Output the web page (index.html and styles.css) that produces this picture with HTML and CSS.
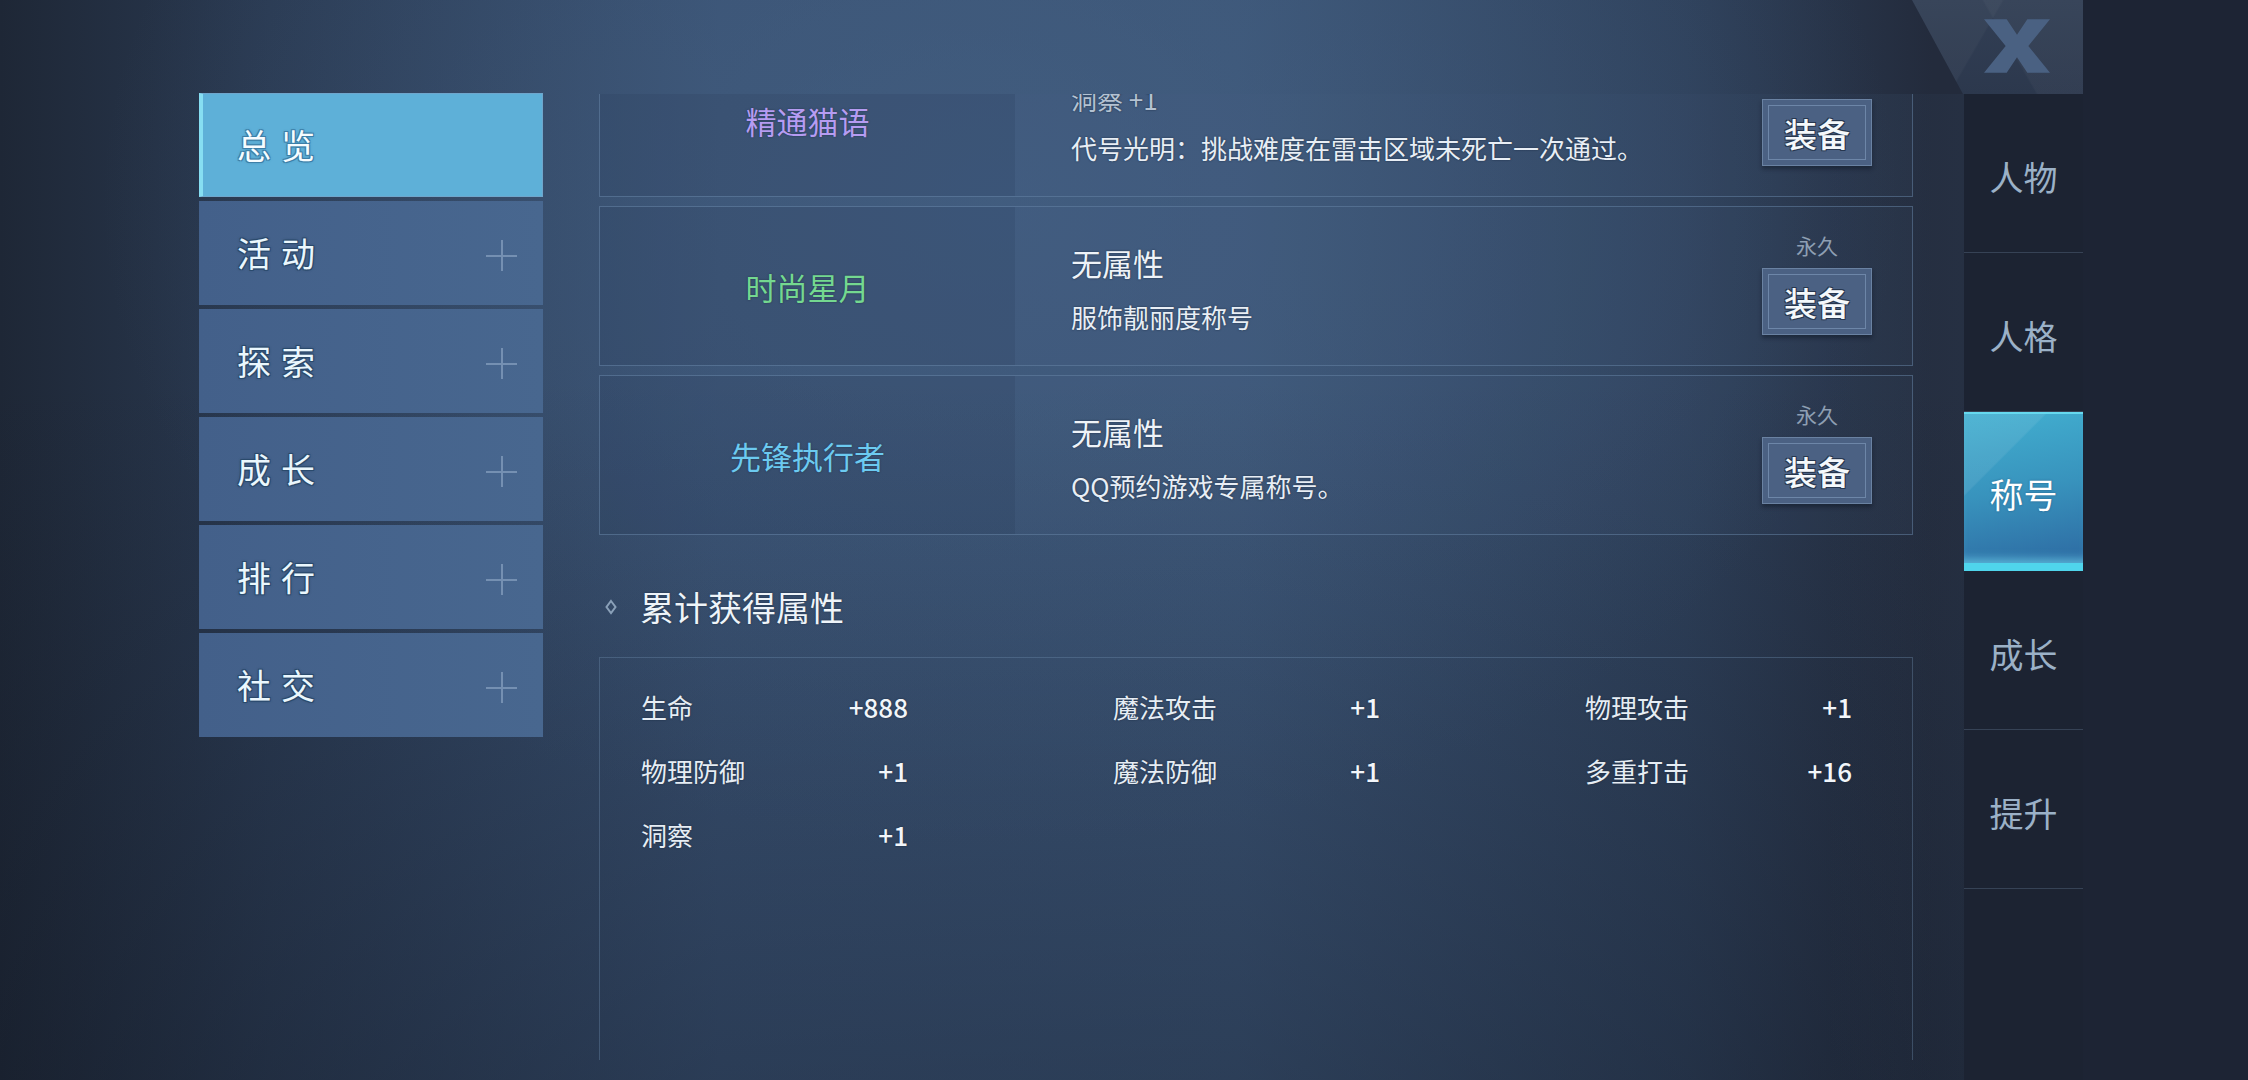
FILE: index.html
```html
<!DOCTYPE html>
<html lang="zh-CN">
<head>
  <meta charset="UTF-8" />
  <meta name="viewport" content="width=device-width, initial-scale=1.0"/>
  <title>称号</title>
  <link rel="stylesheet" href="styles.css">
</head>
<body>
  <div class="app">
    <ul class="sidebar">
      <li class="side-item active">总览</li>
      <li class="side-item">活动<span class="plus"></span></li>
      <li class="side-item">探索<span class="plus"></span></li>
      <li class="side-item">成长<span class="plus"></span></li>
      <li class="side-item">排行<span class="plus"></span></li>
      <li class="side-item">社交<span class="plus"></span></li>
    </ul>

    <div class="right-area">
      <div class="header">
        <button class="close" type="button" aria-label="关闭">
          <svg width="66" height="54" viewBox="0 0 64 52">
            <polygon points="0,0 22,0 32,15 42,0 64,0 43,26 64,52 42,52 32,37 22,52 0,52 21,26" fill="#4a6182"/>
          </svg>
        </button>
      </div>

      <div class="body">
        <div class="content">
          <div class="scroll">
            <div class="card">
              <div class="card-name purple">精通猫语</div>
              <div class="card-info">
                <div class="card-title stat">洞察 +1</div>
                <div class="card-desc">代号光明：挑战难度在雷击区域未死亡一次通过。</div>
              </div>
              <div class="card-action">
                <span class="expire">永久</span>
                <button class="equip" type="button">装备</button>
              </div>
            </div>

            <div class="card">
              <div class="card-name green">时尚星月</div>
              <div class="card-info">
                <div class="card-title">无属性</div>
                <div class="card-desc">服饰靓丽度称号</div>
              </div>
              <div class="card-action">
                <span class="expire">永久</span>
                <button class="equip" type="button">装备</button>
              </div>
            </div>

            <div class="card">
              <div class="card-name cyan">先锋执行者</div>
              <div class="card-info">
                <div class="card-title">无属性</div>
                <div class="card-desc">QQ预约游戏专属称号。</div>
              </div>
              <div class="card-action">
                <span class="expire">永久</span>
                <button class="equip" type="button">装备</button>
              </div>
            </div>

            <h3 class="section-title">
              <svg class="diamond" width="12" height="16" viewBox="0 0 12 16">
                <polygon points="6,2 10.5,8 6,14 1.5,8" fill="none" stroke="#8aa0b8" stroke-width="2"/>
              </svg>
              累计获得属性
            </h3>

            <div class="stats-box">
              <div class="stats">
                <div class="stat-row"><span>生命</span><b>+888</b></div>
                <div class="stat-row"><span>魔法攻击</span><b>+1</b></div>
                <div class="stat-row"><span>物理攻击</span><b>+1</b></div>
                <div class="stat-row"><span>物理防御</span><b>+1</b></div>
                <div class="stat-row"><span>魔法防御</span><b>+1</b></div>
                <div class="stat-row"><span>多重打击</span><b>+16</b></div>
                <div class="stat-row"><span>洞察</span><b>+1</b></div>
              </div>
            </div>
          </div>
        </div>

        <ul class="nav">
          <li class="nav-item">人物</li>
          <li class="nav-item">人格</li>
          <li class="nav-item active">称号</li>
          <li class="nav-item">成长</li>
          <li class="nav-item">提升</li>
        </ul>
      </div>
    </div>

    <div class="edge"></div>
  </div>
</body>
</html>
```

FILE: styles.css
```css
* {
  box-sizing: border-box;
}

body {
  margin: 0;
  width: 2248px;
  height: 1080px;
  overflow: hidden;
  font-family: "Noto Sans CJK SC", "Noto Sans", sans-serif;
  color: #e8eef5;
  background-color: #2b3d56;
  background-image:
    linear-gradient(180deg, rgba(16, 22, 34, 0) 35%, rgba(16, 22, 34, 0.35) 100%),
    radial-gradient(ellipse 900px 650px at 1000px 200px, rgba(72, 102, 138, 0.5), rgba(72, 102, 138, 0)),
    linear-gradient(90deg, #1e2736 0%, #2a3a52 12%, #395172 32%, #3b5475 55%, #2e405a 75%, #232b3c 86%);
}

ul {
  list-style: none;
  margin: 0;
  padding: 0;
}

button {
  font-family: inherit;
  border: none;
  padding: 0;
  cursor: pointer;
}

.app {
  display: flex;
  height: 100%;
}

/* left menu */

.sidebar {
  width: 344px;
  margin: 93px 0 0 199px;
  display: flex;
  flex-direction: column;
  gap: 4px;
}

.side-item {
  height: 104px;
  display: flex;
  align-items: center;
  justify-content: space-between;
  padding: 0 26px 2px 38px;
  background: linear-gradient(90deg, #43608a, #48678f);
  font-size: 34px;
  letter-spacing: 10px;
  color: #eaf7fd;
  text-shadow: -1px -1px 0 #2a4a6c, 1px -1px 0 #2a4a6c, -1px 1px 0 #2a4a6c, 1px 1px 0 #2a4a6c, 0 0 3px #1e3652;
}

.side-item.active {
  background: #5eb0d8;
  border: 1px solid #6fa6cc;
  border-left: 4px solid #86def2;
  padding-left: 34px;
  color: #f6fcff;
  text-shadow: -1px -1px 0 #3d7fa8, 1px -1px 0 #3d7fa8, -1px 1px 0 #3d7fa8, 1px 1px 0 #3d7fa8, 0 0 3px #2f6d96;
}

.plus {
  position: relative;
  width: 31px;
  height: 31px;
  margin-top: 6px;
}

.plus::before,
.plus::after {
  content: "";
  position: absolute;
  background: #7590b2;
}

.plus::before {
  left: 0;
  right: 0;
  top: 15px;
  height: 2px;
}

.plus::after {
  top: 0;
  bottom: 0;
  left: 15px;
  width: 2px;
}

/* right part */

.right-area {
  width: 1484px;
  margin-left: 56px;
  display: flex;
  flex-direction: column;
}

.header {
  height: 94px;
  display: flex;
  justify-content: flex-end;
}

.close {
  width: 171px;
  height: 94px;
  display: flex;
  align-items: center;
  justify-content: flex-end;
  padding: 0 33px 2px 0;
  clip-path: polygon(0 0, 100% 0, 100% 100%, 51px 100%);
  background:
    linear-gradient(60deg, rgba(255, 255, 255, 0) 55%, rgba(255, 255, 255, 0.03) 56%),
    linear-gradient(120deg, rgba(255, 255, 255, 0.03) 40%, rgba(255, 255, 255, 0) 41%),
    linear-gradient(180deg, #323f55, #2c384d);
}

.body {
  flex: 1;
  display: flex;
  min-height: 0;
}

.content {
  width: 1365px;
  overflow: hidden;
  background: linear-gradient(90deg, rgba(255, 255, 255, 0) 90%, rgba(60, 85, 115, 0.12));
}

.scroll {
  height: 1037px;
  margin-top: -51px;
  padding-right: 51px;
  display: flex;
  flex-direction: column;
}

/* title cards */

.card {
  display: grid;
  grid-template-columns: 415px 1fr auto;
  border: 1px solid rgba(104, 134, 168, 0.5);
  background: rgba(74, 104, 138, 0.08);
  margin-bottom: 9px;
}

.card-name {
  display: flex;
  align-items: center;
  justify-content: center;
  font-size: 31px;
  background: rgba(30, 44, 68, 0.14);
  text-shadow: 0 0 2px rgba(20, 32, 50, 0.6);
}

.purple { color: #b69cf2; }
.green { color: #74d890; }
.cyan { color: #6ccaf0; }

.card-info {
  padding: 36px 0 30px 56px;
}

.card-title {
  font-size: 31px;
  line-height: 40px;
  margin-bottom: 16px;
  color: #eef3f8;
  text-shadow: 0 0 2px #1c2d44;
}

.card-title.stat {
  font-size: 26px;
  line-height: 38px;
  margin-bottom: 12px;
  color: #b4c2d2;
}

.card-desc {
  font-size: 26px;
  line-height: 36px;
  color: #e8eef5;
  text-shadow: 0 0 2px #1c2d44;
}

.card-action {
  display: flex;
  flex-direction: column;
  align-items: center;
  justify-content: flex-end;
  padding: 0 40px 30px 0;
}

.expire {
  font-size: 21px;
  line-height: 24px;
  margin-bottom: 11px;
  color: #8e9fb3;
}

.equip {
  width: 110px;
  height: 67px;
  background: #4b6183;
  border: 1px solid #6a82a2;
  box-shadow: inset 0 0 0 5px #4b6183, inset 0 0 0 6px #6d86a8, 0 3px 4px rgba(10, 18, 30, 0.45);
  font-size: 33px;
  font-weight: 500;
  color: #f4f8fb;
  text-shadow: -1px -1px 0 #27374f, 1px -1px 0 #27374f, -1px 1px 0 #27374f, 1px 1px 0 #27374f;
}

/* accumulated stats */

.section-title {
  display: flex;
  align-items: center;
  margin: 40px 0 0;
  height: 44px;
  font-size: 34px;
  font-weight: 400;
  color: #eef4f9;
  text-shadow: 0 0 2px #1c2d44;
}

.diamond {
  margin: 2px 23px 0 6px;
}

.stats-box {
  flex: 1;
  margin: 29px 0 20px;
  border: 1px solid rgba(104, 134, 168, 0.4);
  border-bottom: none;
  padding: 31px 0 0 41px;
}

.stats {
  display: grid;
  grid-template-columns: repeat(3, 267px);
  column-gap: 205px;
  row-gap: 28px;
}

.stat-row {
  display: flex;
  justify-content: space-between;
  font-size: 26px;
  line-height: 36px;
  color: #e6edf4;
  text-shadow: 0 0 2px #1a2a40;
}

.stat-row b {
  font-weight: 500;
  color: #f2f6fa;
}

/* right tabs */

.nav {
  width: 119px;
  background: #1c2332;
}

.nav-item {
  height: 159px;
  display: flex;
  align-items: center;
  justify-content: center;
  padding-top: 6px;
  border-bottom: 1px solid #364255;
  font-size: 34px;
  color: #9bb1c7;
}

.nav-item.active {
  color: #ffffff;
  padding-top: 10px;
  border-top: 2px solid #66d9ef;
  border-bottom: 8px solid #4fd5ec;
  background:
    linear-gradient(135deg, rgba(255, 255, 255, 0.08) 30%, rgba(255, 255, 255, 0) 31%),
    linear-gradient(170deg, #42afd0 0%, #3893bd 50%, #2d6aa2 100%);
  box-shadow: inset 0 -10px 10px -6px rgba(120, 230, 250, 0.6);
  text-shadow: 0 0 2px rgba(20, 60, 100, 0.6);
}

.edge {
  flex: 1;
  background: #1d2434;
}
```
